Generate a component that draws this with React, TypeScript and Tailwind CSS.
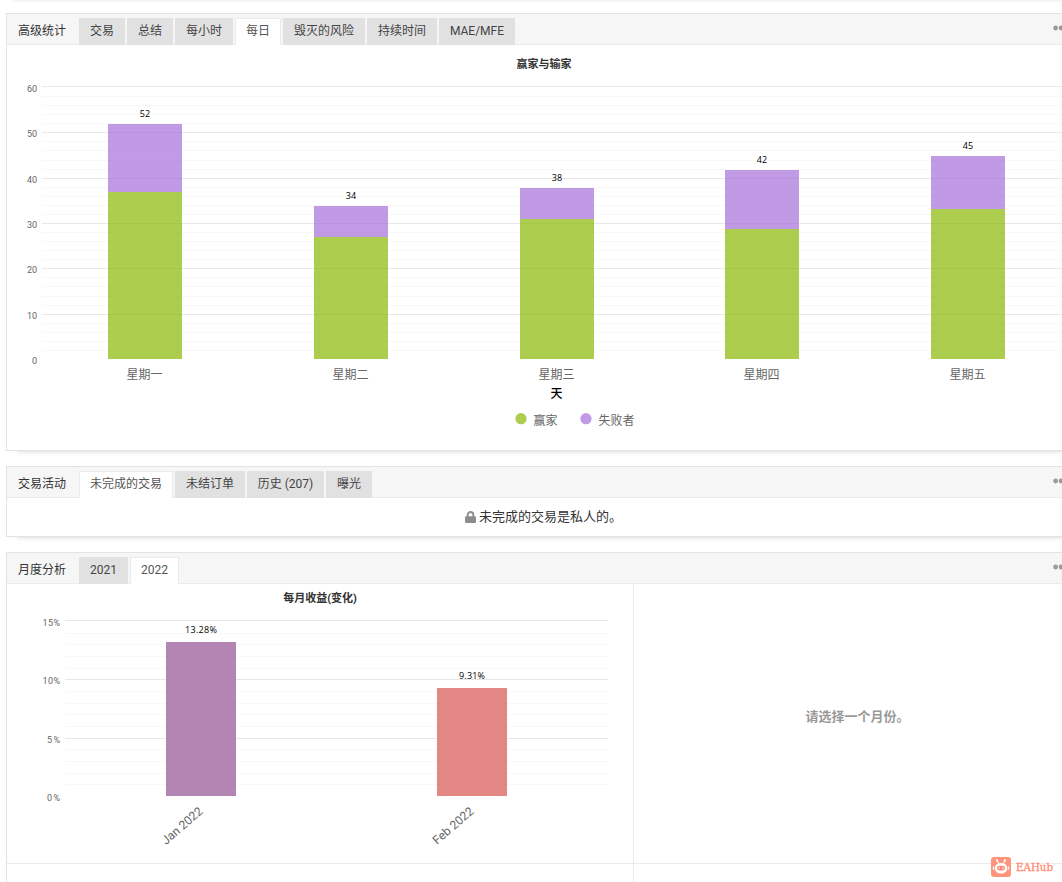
import React from "react";

const UI = "font-[Roboto,'Noto_Sans_CJK_SC',sans-serif]";
const LABEL = "font-['Open_Sans','Noto_Sans_CJK_SC',sans-serif]";

type Tab = { label: string; width: string; active?: boolean };

function Header({ title, tabs }: { title: string; tabs: Tab[] }) {
  return (
    <div className="flex h-[31px] border-b border-[#ebebeb] bg-[#f6f6f6] pt-1">
      <div className="w-[72px] shrink-0 pl-[11px] text-xs leading-[27px] whitespace-nowrap text-[#333]">{title}</div>
      <div className="flex gap-0.5">
        {tabs.map((t) => (
          <div
            key={t.label}
            className={`${t.width} h-[27px] shrink-0 text-center text-xs whitespace-nowrap ${
              t.active
                ? "border border-b-0 border-[#ebebeb] bg-white leading-[25px] text-[#555]"
                : "bg-[#e1e1e1] leading-[27px] text-[#444]"
            }`}
          >
            {t.label}
          </div>
        ))}
      </div>
      <svg className="mt-[7px] mr-[7px] ml-auto shrink-0" width="17" height="6" viewBox="0 0 17 6" fill="#999">
        <circle cx="2.6" cy="3" r="2.4" />
        <circle cx="8.1" cy="3" r="2.4" />
        <circle cx="13.6" cy="3" r="2.4" />
      </svg>
    </div>
  );
}

const days = [
  { name: "星期一", x: 108, top: 124, split: 192, total: 52 },
  { name: "星期二", x: 314, top: 206, split: 237, total: 34 },
  { name: "星期三", x: 520, top: 188, split: 219, total: 38 },
  { name: "星期四", x: 725, top: 170, split: 229, total: 42 },
  { name: "星期五", x: 931, top: 156, split: 209, total: 45 },
];

function DailyChart() {
  const lines = Array.from({ length: 30 }, (_, i) => i + 1);
  return (
    <svg className={`block ${UI}`} width="1055" height="405" viewBox="7 45 1055 405">
      <text x="544" y="68" textAnchor="middle" fontSize="11" fontWeight="700" fill="#333">赢家与输家</text>
      {lines.map((k) => (
        <rect key={k} x="42" y={k === 30 ? 86 : Math.round(359 - 9.067 * k)} width="1020" height="1" fill={k % 5 === 0 ? "#e8e8e8" : "#f8f8f8"} />
      ))}
      {[0, 10, 20, 30, 40, 50, 60].map((v) => (
        <text key={v} x="37" y={Math.round(363.8 - v * 4.53)} textAnchor="end" fontSize="9" fill="#666">{v}</text>
      ))}
      {days.map((d) => (
        <g key={d.name}>
          <rect x={d.x} y={d.top} width="74" height={d.split - d.top} fill="#a66fdb" fillOpacity="0.7" />
          <rect x={d.x} y={d.split} width="74" height={359 - d.split} fill="#8ab803" fillOpacity="0.7" />
          <text className={LABEL} x={d.x + 37} y={d.top - 7} textAnchor="middle" fontSize="9" fill="#000">{d.total}</text>
          <text x={d.x + 36.5} y="379" textAnchor="middle" fontSize="12" fill="#666">{d.name}</text>
        </g>
      ))}
      <text x="556.5" y="398" textAnchor="middle" fontSize="12" fontWeight="500" fill="#000">天</text>
      <circle cx="521" cy="418.7" r="5.6" fill="#adcd4f" />
      <text x="533.5" y="425" fontSize="12" fill="#666">赢家</text>
      <circle cx="586" cy="418.7" r="5.6" fill="#c19ae6" />
      <text x="598.5" y="425" fontSize="12" fill="#666">失败者</text>
    </svg>
  );
}

const monthMajor = [620, 679, 738];
const monthMinor = [633, 644, 656, 668, 691, 703, 714, 726, 749, 761, 773, 784];

function MonthlyChart() {
  return (
    <svg className={`block ${UI}`} width="626" height="279" viewBox="7 584 626 279">
      <text x="320" y="602" textAnchor="middle" fontSize="11" fontWeight="700" fill="#333">每月收益(变化)</text>
      {monthMinor.map((y) => (
        <rect key={y} x="65" y={y} width="543" height="1" fill="#f8f8f8" />
      ))}
      {monthMajor.map((y) => (
        <rect key={y} x="65" y={y} width="543" height="1" fill="#e8e8e8" />
      ))}
      <text x="60" y="626" textAnchor="end" fontSize="9" fill="#666" textLength="17.5">15%</text>
      <text x="60" y="684" textAnchor="end" fontSize="9" fill="#666" textLength="17.5">10%</text>
      <text x="60" y="743" textAnchor="end" fontSize="9" fill="#666" textLength="13">5%</text>
      <text x="60" y="801" textAnchor="end" fontSize="9" fill="#666" textLength="13">0%</text>
      <rect x="166" y="642" width="70" height="154" fill="#b385b3" />
      <rect x="437" y="688" width="70" height="108" fill="#e28784" />
      <text className={LABEL} x="201" y="633" textAnchor="middle" fontSize="9" fill="#000" textLength="32">13.28%</text>
      <text className={LABEL} x="472" y="679" textAnchor="middle" fontSize="9" fill="#000" textLength="26">9.31%</text>
      <text transform="translate(203.5 812.5) rotate(-41)" textAnchor="end" fontSize="12" fill="#666">Jan 2022</text>
      <text transform="translate(474.5 812.5) rotate(-41)" textAnchor="end" fontSize="12" fill="#666">Feb 2022</text>
    </svg>
  );
}

function Watermark() {
  return (
    <svg className="absolute top-[856px] left-[990px]" width="66" height="22" viewBox="0 0 66 22">
      <rect x="1" y="1" width="20" height="20" rx="3" fill="#ff8c70" fillOpacity="0.92" />
      <path d="M7.2 4.5 8.7 8M14.8 4.5 13.3 8" stroke="#fff" strokeWidth="1.1" />
      <circle cx="7.1" cy="4.4" r="1.1" fill="#fff" />
      <circle cx="14.9" cy="4.4" r="1.1" fill="#fff" />
      <ellipse cx="11" cy="12.3" rx="6.4" ry="5.2" fill="#fff" />
      <path d="M3.4 10.4v3.4M18.6 10.4v3.4" stroke="#fff" strokeWidth="1.1" />
      <rect x="7" y="9.8" width="8" height="4.6" rx="2.3" fill="#ff8c70" />
      <circle cx="9.2" cy="12.1" r="0.8" fill="#fff" />
      <circle cx="12.8" cy="12.1" r="0.8" fill="#fff" />
      <text className="font-['DejaVu_Serif',serif]" x="26" y="15.2" fontSize="11.5" fill="#ff8c70" stroke="#ff8c70" strokeWidth="0.3" textLength="37" lengthAdjust="spacingAndGlyphs">EAHub</text>
    </svg>
  );
}

const panel = "w-[1072px] border border-[#e3e3e3] bg-white shadow-[9px_3px_4px_-2px_rgba(90,90,115,0.2)]";

export default function App() {
  return (
    <div className={`relative h-[882px] w-[1062px] overflow-hidden bg-white ${UI}`}>
      <div className="ml-3 h-0.5 bg-[#f6f6f6]" />
      <div className="flex flex-col gap-[15px] pt-[11px] pl-1.5">
        <section className={`${panel} h-[438px] shrink-0`}>
          <Header
            title="高级统计"
            tabs={[
              { label: "交易", width: "w-[46px]" },
              { label: "总结", width: "w-[46px]" },
              { label: "每小时", width: "w-[58px]" },
              { label: "每日", width: "w-[46px]", active: true },
              { label: "毁灭的风险", width: "w-[82px]" },
              { label: "持续时间", width: "w-[70px]" },
              { label: "MAE/MFE", width: "w-[76px]" },
            ]}
          />
          <DailyChart />
        </section>

        <section className={`${panel} h-[71px] shrink-0`}>
          <Header
            title="交易活动"
            tabs={[
              { label: "未完成的交易", width: "w-[94px]", active: true },
              { label: "未结订单", width: "w-[70px]" },
              { label: "历史 (207)", width: "w-[77px]" },
              { label: "曝光", width: "w-[46px]" },
            ]}
          />
          <div className="flex h-[37px] items-center gap-[3px] pl-[458px] text-[13px] text-[#333]">
            <svg width="11" height="12" viewBox="0 0 11 12">
              <path d="M2.7 6V3.8a2.8 2.8 0 0 1 5.6 0V6" fill="none" stroke="#8c8c8c" strokeWidth="1.8" />
              <rect y="5.2" width="11" height="6.8" rx="1.2" fill="#8c8c8c" />
            </svg>
            <span>未完成的交易是私人的。</span>
          </div>
        </section>

        <section className={`${panel} h-[400px] shrink-0`}>
          <Header
            title="月度分析"
            tabs={[
              { label: "2021", width: "w-[49px]" },
              { label: "2022", width: "w-[49px]", active: true },
            ]}
          />
          <div className="grid h-[280px] grid-cols-[627px_1fr] border-b border-[#ebebeb]">
            <div className="border-r border-[#ebebeb]">
              <MonthlyChart />
            </div>
            <div className="pt-[123px] pl-[171.5px] text-[13px] leading-5 font-bold text-[#999]">请选择一个月份。</div>
          </div>
          <div className="h-[88px] w-[627px] border-r border-[#ebebeb]" />
        </section>
      </div>
      <Watermark />
    </div>
  );
}
